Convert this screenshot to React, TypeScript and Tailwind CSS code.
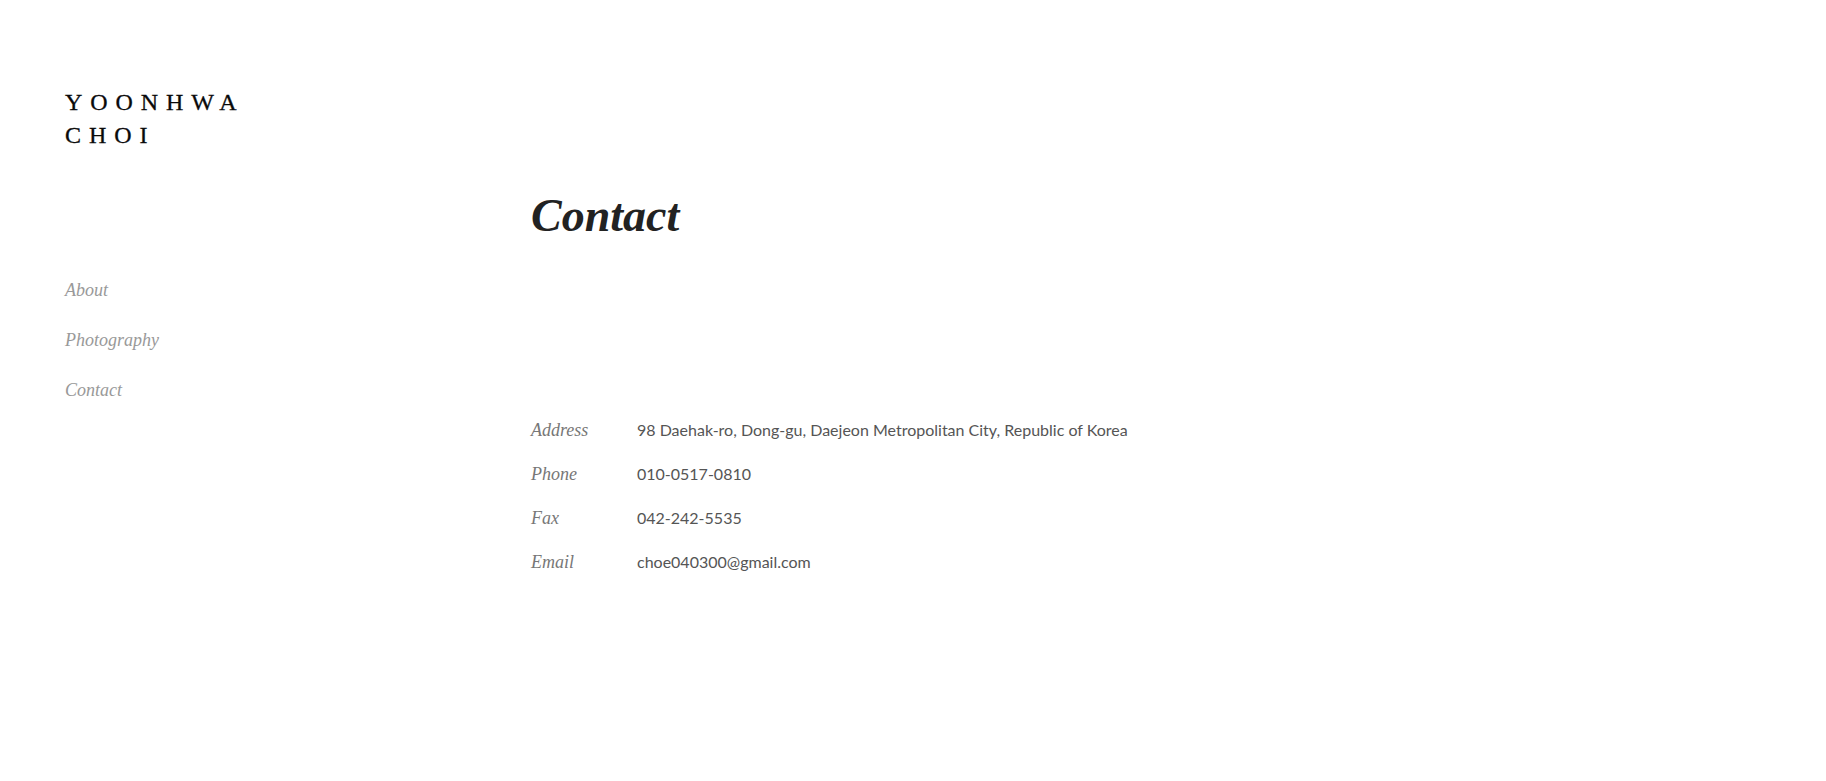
const navItems = ["About", "Photography", "Contact"];

const contactRows = [
  { label: "Address", value: "98 Daehak-ro, Dong-gu, Daejeon Metropolitan City, Republic of Korea" },
  { label: "Phone", value: "010-0517-0810" },
  { label: "Fax", value: "042-242-5535" },
  { label: "Email", value: "choe040300@gmail.com" },
];

export default function App() {
  return (
    <div className="flex min-h-[781px] w-full bg-white">
      {/* sidebar */}
      <aside className="w-[531px] shrink-0 pl-[65px] pt-[86px]">
        <h1 className="font-['Liberation_Serif',serif] text-[24px] leading-[33px] tracking-[0.33em] text-[#0a0a0a] [-webkit-text-stroke:0.3px_#0a0a0a]">
          YOONHWA
          <br />
          CHOI
        </h1>
        <nav className="mt-[126px] flex flex-col gap-[26px]">
          {navItems.map((item) => (
            <a
              key={item}
              className="font-['Liberation_Serif',serif] text-[18px] italic leading-[24px] text-[#999]"
            >
              {item}
            </a>
          ))}
        </nav>
      </aside>

      {/* main */}
      <main className="flex-1 pt-[188px]">
        <h2 className="font-['Liberation_Serif',serif] text-[46px] font-bold italic leading-[56px] text-[#222]">
          Contact
        </h2>
        <div className="mt-[164px] flex flex-col">
          {contactRows.map((row) => (
            <div key={row.label} className="flex h-[44px] items-baseline">
              <span className="w-[106px] shrink-0 font-['Liberation_Serif',serif] text-[18px] italic leading-[44px] text-[#777]">
                {row.label}
              </span>
              <span className="font-['Lato',sans-serif] text-[16px] leading-[44px] text-[#555]">
                {row.value}
              </span>
            </div>
          ))}
        </div>
      </main>
    </div>
  );
}
